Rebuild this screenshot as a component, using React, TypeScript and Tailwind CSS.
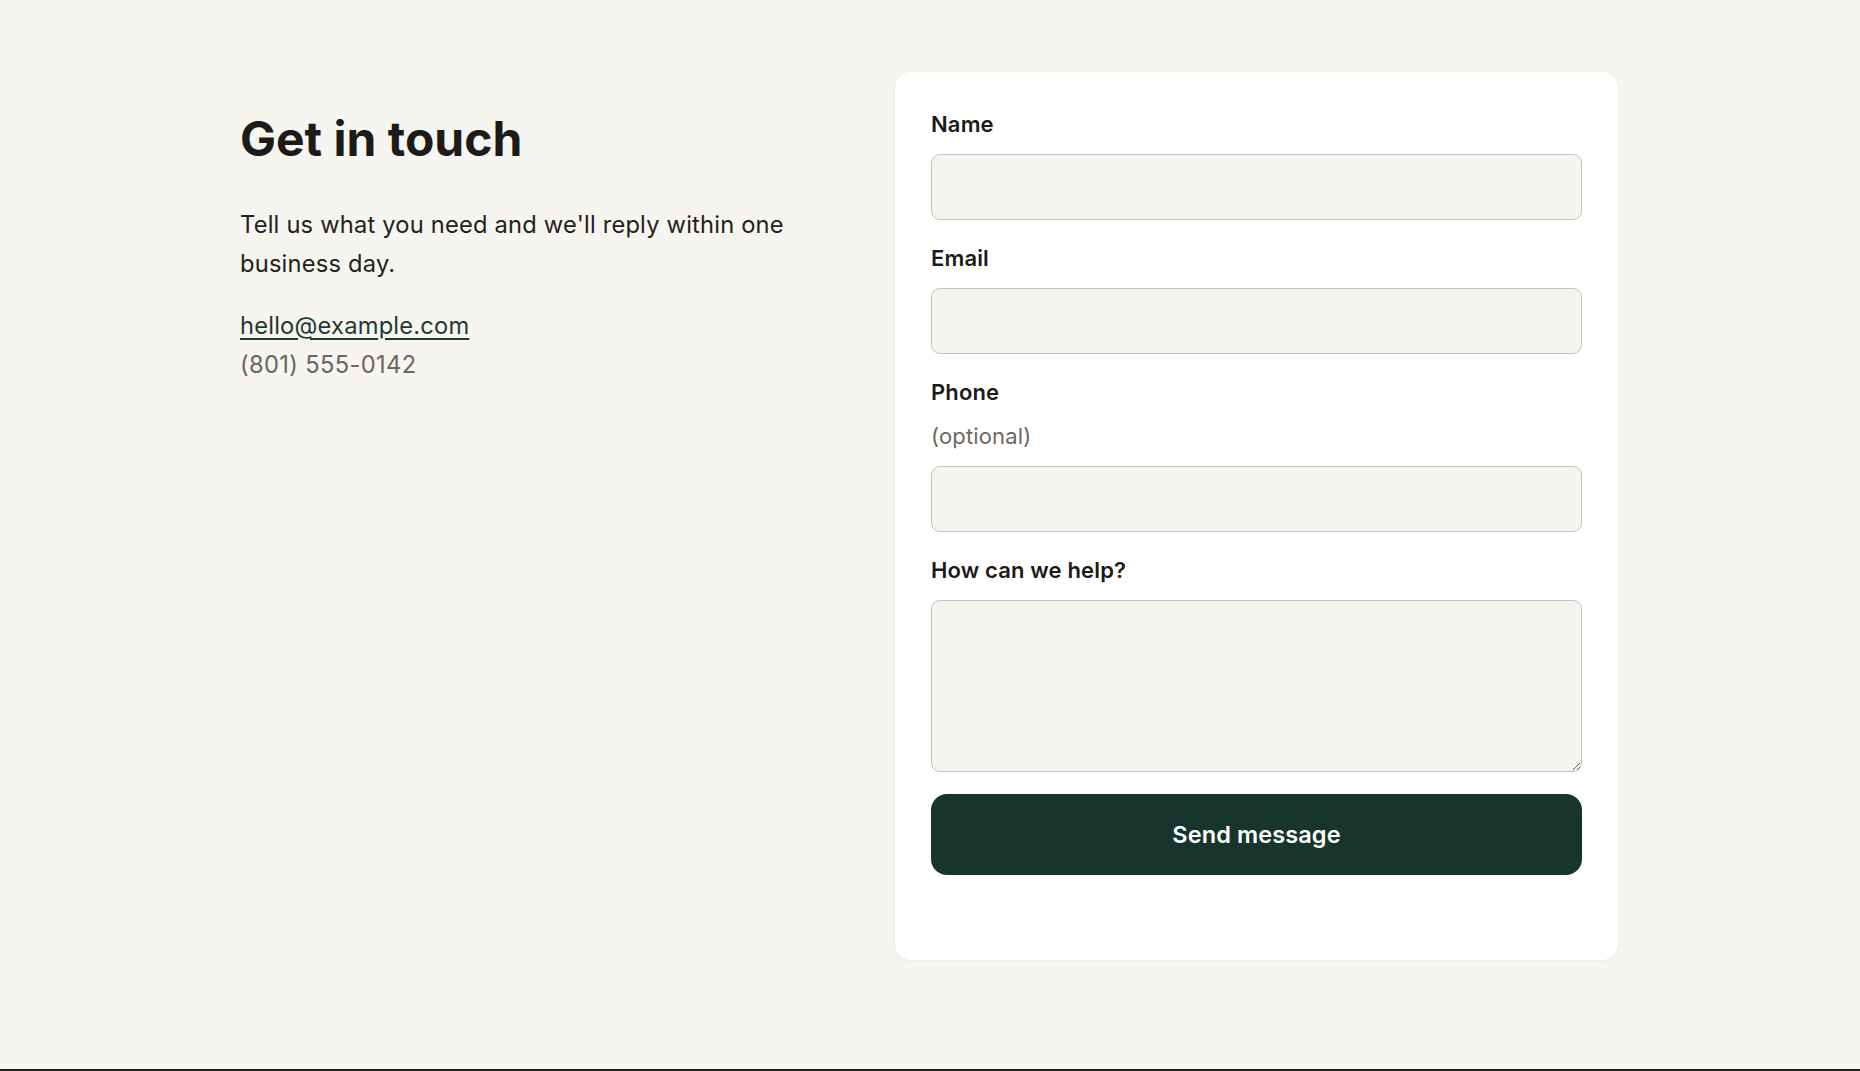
import React from "react";

function Field({
  label,
  optional,
  children,
}: {
  label: string;
  optional?: boolean;
  children: React.ReactNode;
}) {
  return (
    <div className="flex flex-col">
      <label className="flex flex-col text-[22px] leading-[32px] font-semibold tracking-[0.15px] text-[#1c1b18]">
        <span>{label}</span>
        {optional && (
          <span className="mt-[12px] font-normal text-[#6b6760]">(optional)</span>
        )}
      </label>
      <div className="mt-[14px]">{children}</div>
    </div>
  );
}

export default function App() {
  const inputCls =
    "block w-full h-[66px] rounded-[9px] border-[1.5px] border-[#c5c3bc] bg-[#f5f4ee] px-4 text-[21px] text-[#1c1b18] outline-none";
  return (
    <div
      className="bg-[#f6f5f0] text-[#1c1b18]"
      style={{ fontFamily: "Inter, 'Noto Sans', sans-serif" }}
    >
      <main className="h-[1069px] pt-[72px]">
        <div className="ml-[240px] flex w-[1378px] items-start justify-between">
          <section className="w-[600px] pt-[38px]">
            <h1 className="text-[48px] leading-[57px] font-bold text-[#1c1b18]">
              Get in touch
            </h1>
            <p className="mt-[38px] max-w-[570px] text-[23.7px] leading-[39px] tracking-[0.2px] text-[#23221e]">
              Tell us what you need and we'll reply within one business day.
            </p>
            <div className="mt-[23px] flex flex-col text-[23.7px] leading-[39px] tracking-[0.2px]">
              <a
                href="#"
                className="w-fit text-[#1e3a32] underline decoration-[1.5px] underline-offset-[4px]"
              >
                hello@example.com
              </a>
              <span className="tracking-[0.35px] text-[#6b665e]">(801) 555-0142</span>
            </div>
          </section>

          <form
            className="w-[723px] rounded-[16px] bg-white pt-[36px] pb-[85px] px-[36px] shadow-[0_1px_4px_rgba(0,0,0,0.05)]"
            onSubmit={(e) => e.preventDefault()}
          >
            <div className="flex flex-col gap-[22px]">
              <Field label="Name">
                <input type="text" className={inputCls} />
              </Field>
              <Field label="Email">
                <input type="email" className={inputCls} />
              </Field>
              <Field label="Phone" optional>
                <input type="tel" className={inputCls} />
              </Field>
              <Field label="How can we help?">
                <textarea className="block w-full h-[172px] rounded-[9px] border-[1.5px] border-[#c5c3bc] bg-[#f5f4ee] px-4 py-3 text-[21px] outline-none" />
              </Field>
              <button
                type="submit"
                className="h-[81px] w-full rounded-[16px] bg-[#17352d] text-[23.5px] font-semibold tracking-[0.1px] text-white"
              >
                Send message
              </button>
            </div>
          </form>
        </div>
      </main>
      <footer className="h-[40px] bg-[#1f1f1c]" />
    </div>
  );
}
